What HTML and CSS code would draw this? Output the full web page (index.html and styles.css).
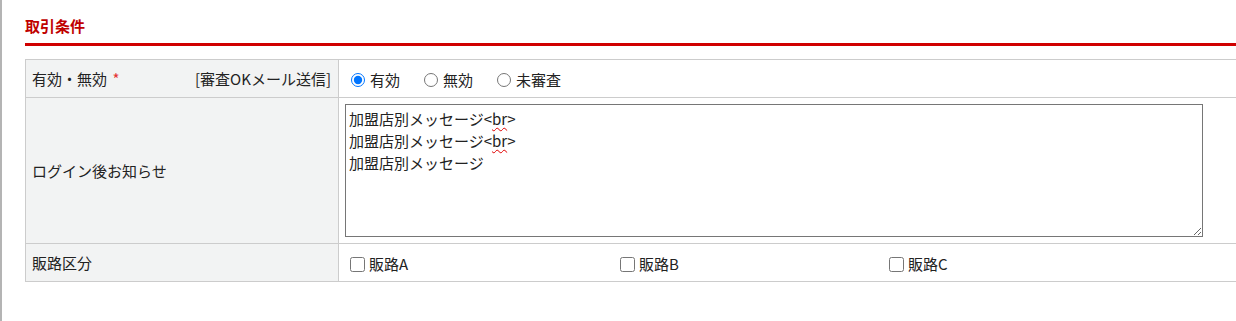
FILE: index.html
```html
<!DOCTYPE html>
<html lang="ja">
<head>
<meta charset="utf-8">
<link rel="stylesheet" href="styles.css">
</head>
<body>
<div class="page">
  <h2 class="title">取引条件</h2>
  <div class="bar"></div>
  <div class="form">
    <div class="label label-split">
      <span>有効・無効 <span class="req">*</span></span>
      <span>[審査OKメール送信]</span>
    </div>
    <div class="value radios">
      <label class="opt"><input type="radio" name="st" checked>有効</label>
      <label class="opt"><input type="radio" name="st">無効</label>
      <label class="opt"><input type="radio" name="st">未審査</label>
    </div>

    <div class="label label-tall">ログイン後お知らせ</div>
    <div class="value value-ta">
      <div class="ta" contenteditable="true" spellcheck="false">加盟店別メッセージ&lt;<span class="sp">br</span>&gt;<br>加盟店別メッセージ&lt;<span class="sp">br</span>&gt;<br>加盟店別メッセージ</div>
    </div>

    <div class="label">販路区分</div>
    <div class="value checks">
      <label class="chk"><input type="checkbox">販路A</label>
      <label class="chk"><input type="checkbox">販路B</label>
      <label class="chk"><input type="checkbox">販路C</label>
    </div>
  </div>
</div>
</body>
</html>
```
FILE: styles.css
```css
html, body {
  margin: 0;
  padding: 0;
  background: #fff;
}
body {
  font-family: "Noto Sans CJK JP", "Noto Sans", sans-serif;
  font-size: 15px;
  color: #222;
  overflow: hidden;
}
.page {
  border-left: 2px solid #b4b4b4;
  padding-left: 23px;
  min-height: 321px;
  box-sizing: border-box;
}
.title {
  margin: 0;
  padding-top: 16px;
  font-size: 15px;
  line-height: 20px;
  font-weight: bold;
  color: #c00000;
  margin-bottom: 7px;
}
.bar {
  height: 3px;
  background: #d00000;
  margin-bottom: 13px;
}
.form {
  display: grid;
  grid-template-columns: 314px 1fr;
  border-top: 1px solid #cccccc;
}
.label {
  box-sizing: border-box;
  background: #f2f3f3;
  border-left: 1px solid #cccccc;
  border-right: 1px solid #cccccc;
  border-bottom: 1px solid #cccccc;
  padding: 0 7px 0 6px;
  height: 38px;
  display: flex;
  align-items: center;
  line-height: 20px;
}
.label-split {
  justify-content: space-between;
}
.label-tall {
  height: 146px;
}
.req {
  color: #e53333;
  margin-left: 2px;
}
.value {
  border-bottom: 1px solid #cccccc;
  display: flex;
  align-items: center;
  line-height: 20px;
}
.radios {
  padding-left: 11px;
  gap: 23px;
  padding-top: 2px;
}
.opt, .chk {
  display: flex;
  align-items: center;
}
.opt input {
  width: 14px;
  height: 14px;
  margin: 0 5px 0 1px;
}
.chk input {
  width: 15px;
  height: 15px;
  margin: 0 4px 0 0;
}
.value-ta {
  padding: 6px 0 0 6px;
  align-items: flex-start;
}
.ta {
  box-sizing: border-box;
  width: 858px;
  height: 133px;
  border: 1px solid #767676;
  font-size: 15px;
  line-height: 22px;
  color: #222;
  padding: 3px 3px;
  margin: 0;
  overflow: auto;
  resize: both;
  outline: none;
  background: #fff;
}
.sp {
  text-decoration: underline wavy #e00000;
  text-decoration-thickness: 1px;
  text-underline-offset: 2px;
}
.checks {
  padding-left: 11px;
  display: grid;
  grid-template-columns: 270px 269px 269px;
  align-items: center;
  padding-top: 3px;
}
```
